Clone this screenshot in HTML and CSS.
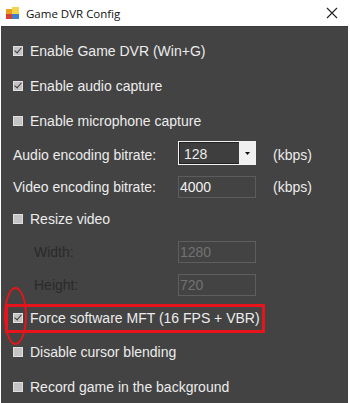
FILE: index.html
```html
<!DOCTYPE html>
<html>
<head>
<meta charset="utf-8">
<link rel="stylesheet" href="styles.css">
</head>
<body>
<div class="window">
  <div class="titlebar">
    <svg class="app-icon" width="14" height="13" viewBox="0 0 14 13">
      <rect x="0" y="2" width="6" height="5" fill="#e8a020"/>
      <rect x="6" y="0" width="7" height="7" fill="#f3d34a"/>
      <rect x="0" y="7" width="6" height="5" fill="#d84030"/>
      <rect x="6" y="7" width="7" height="5" fill="#3f7fd0"/>
    </svg>
    <span class="title">Game DVR Config</span>
    <svg class="close" width="12" height="12" viewBox="0 0 12 12">
      <path d="M1 1 L11 11 M11 1 L1 11" stroke="#222" stroke-width="1.1"/>
    </svg>
  </div>
  <div class="body">
    <div class="row r1"><span class="cb checked"></span>Enable Game DVR (Win+G)</div>
    <div class="row r2"><span class="cb checked"></span>Enable audio capture</div>
    <div class="row r3"><span class="cb"></span>Enable microphone capture</div>
    <div class="row r4 field">
      <span class="label">Audio encoding bitrate:</span>
      <div class="combo"><span class="combo-val">128</span><span class="combo-btn"><svg width="5" height="3" viewBox="0 0 5 3"><path d="M0 0 H5 L2.5 3Z" fill="#111"/></svg></span></div>
      <span class="unit">(kbps)</span>
    </div>
    <div class="row r5 field">
      <span class="label">Video encoding bitrate:</span>
      <div class="input">4000</div>
      <span class="unit">(kbps)</span>
    </div>
    <div class="row r6"><span class="cb"></span>Resize video</div>
    <div class="row r7 field">
      <span class="label dim">Width:</span>
      <div class="input disabled">1280</div>
    </div>
    <div class="row r8 field">
      <span class="label dim">Height:</span>
      <div class="input disabled">720</div>
    </div>
    <div class="row r9 highlight"><span class="cb checked"></span>Force software MFT (16 FPS + VBR)
      <span class="mark-rect"></span>
      <span class="mark-ellipse"></span>
    </div>
    <div class="row r10"><span class="cb"></span>Disable cursor blending</div>
    <div class="row r11"><span class="cb"></span>Record game in the background</div>
  </div>
</div>
</body>
</html>
```

FILE: styles.css
```css
html, body {
  margin: 0;
  padding: 0;
  background: #ffffff;
}
.window {
  width: 350px;
  height: 403px;
  display: flex;
  flex-direction: column;
  overflow: hidden;
}
.titlebar {
  height: 26px;
  flex: none;
  background: #ffffff;
  display: flex;
  align-items: center;
  padding: 0 12px 0 6px;
  box-sizing: border-box;
  font-family: "Open Sans", "Noto Sans", sans-serif;
  font-size: 11.5px;
  color: #111;
}
.app-icon { margin-right: 6px; margin-top: 1px; }
.title { flex: 1; }
.body {
  flex: 1;
  background: #434343;
  margin: 0 2px 3px 1px;
  border-top: 1px solid #3a3a3a;
  padding-top: 6px;
  display: flex;
  flex-direction: column;
  font-family: "Liberation Sans", Arial, sans-serif;
  font-size: 14px;
  color: #ececec;
  position: relative;
}
.row {
  display: flex;
  align-items: center;
  padding-left: 12px;
  position: relative;
}
.r1 { height: 35px; }
.r2 { height: 36px; }
.r3 { height: 34px; }
.r4 { height: 33px; }
.r5 { height: 31px; }
.r6 { height: 33px; }
.r7 { height: 34px; }
.r8 { height: 32px; }
.r9 { height: 34px; }
.r10 { height: 34px; }
.r11 { height: 36px; }
.cb {
  width: 8px;
  height: 8px;
  background: #c4c4c4;
  border: 1px solid #e0e0e0;
  margin-right: 7px;
  flex: none;
  position: relative;
}
.cb.checked::after {
  content: "";
  position: absolute;
  left: 2px;
  top: -1px;
  width: 3px;
  height: 6px;
  border-right: 1.5px solid #3a3a3a;
  border-bottom: 1.5px solid #3a3a3a;
  transform: rotate(40deg);
}
.field .label { width: 165px; flex: none; }
.field .label.dim { color: #2a2a2a; padding-left: 21px; width: 144px; }
.combo {
  width: 78px;
  height: 24px;
  box-sizing: border-box;
  border: 1px solid #f2f2f2;
  display: flex;
  background: #3e3e3e;
  margin-top: -3px;
}
.combo-val {
  flex: 1;
  padding-left: 4px;
  line-height: 22px;
  border: 1px solid #222;
  border-right: none;
}
.combo-btn {
  width: 16px;
  background: #f0f0f0;
  display: flex;
  align-items: center;
  justify-content: center;
}
.input {
  width: 78px;
  height: 22px;
  box-sizing: border-box;
  border: 1px solid #5c5c5c;
  line-height: 20px;
  padding-left: 1px;
  color: #f0f0f0;
}
.input.disabled { color: #727272; border-color: #5e5e5e; }
.unit { margin-left: 17px; }
.mark-rect {
  position: absolute;
  left: 4px;
  top: 3px;
  width: 254px;
  height: 23px;
  border: 3px solid #e8141c;
}
.mark-ellipse {
  position: absolute;
  left: 3px;
  top: -14px;
  width: 19px;
  height: 54px;
  border: 2.5px solid #e8141c;
  border-radius: 50%;
}
```
